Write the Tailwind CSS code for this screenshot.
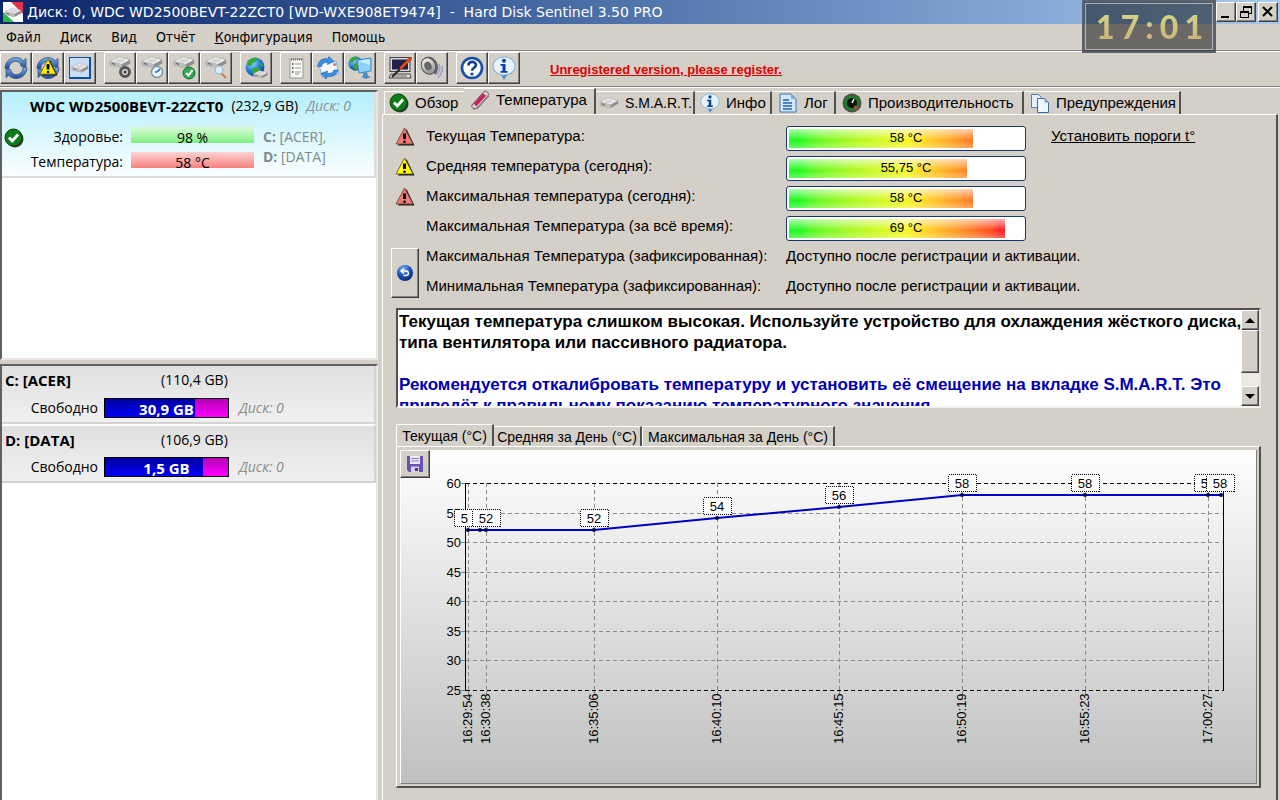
<!DOCTYPE html>
<html lang="ru">
<head>
<meta charset="utf-8">
<title>Hard Disk Sentinel</title>
<script src="https://cdn.jsdelivr.net/npm/@tailwindcss/browser@4"></script>
</head>
<body class="bg-[#d4d0c8] text-black font-['Liberation_Sans',Arial,sans-serif] text-[15px] leading-[18px]">

<svg class="absolute w-0 h-0" aria-hidden="true">
  <defs>
    <linearGradient id="gBlue" x1="0" y1="0" x2="0" y2="1"><stop offset="0" stop-color="#7cb0e0"/><stop offset="1" stop-color="#1c4c98"/></linearGradient>
    <linearGradient id="gGray" x1="0" y1="0" x2="0" y2="1"><stop offset="0" stop-color="#f4f4f4"/><stop offset="1" stop-color="#8c8c8c"/></linearGradient>
    <linearGradient id="gPlot" x1="0" y1="0" x2="0" y2="1"><stop offset="0" stop-color="#fefefe"/><stop offset="1" stop-color="#c0c0c0"/></linearGradient>
    <radialGradient id="gGlobe" cx=".35" cy=".3" r=".8"><stop offset="0" stop-color="#9fdcff"/><stop offset=".5" stop-color="#2a7fd6"/><stop offset="1" stop-color="#0b3c8c"/></radialGradient>
    <radialGradient id="gBall" cx=".4" cy=".25" r=".8"><stop offset="0" stop-color="#7fb2f5"/><stop offset=".5" stop-color="#1b56bd"/><stop offset="1" stop-color="#06246e"/></radialGradient>
  </defs>
  <symbol id="refresh" viewBox="0 0 24 24">
    <path d="M1 12.500C1 6 6 1.500 12 1.500c3 0 5.500 1.200 7.300 3.200L22 2.500v8h-8l2.500-2.600C15.300 6.300 13.700 5.300 12 5.300c-4 0-7 3-7 7.200z" fill="url(#gBlue)" stroke="#24477f" stroke-width=".7"/>
    <path d="M23 11.500C23 18 18 22.500 12 22.500c-3 0-5.500-1.200-7.300-3.200L2 21.500v-8h8l-2.500 2.600c1.200 1.600 2.800 2.600 4.500 2.600 4 0 7-3 7-7.200z" fill="url(#gBlue)" stroke="#24477f" stroke-width=".7"/>
    <circle cx="12" cy="12" r="5.200" fill="#d4d0c8"/>
  </symbol>
  <symbol id="drive" viewBox="0 0 24 14">
    <path d="M1 6l9-4.500L23 4v4l-9 5L1 10z" fill="#8d8d8d"/>
    <path d="M1 5.500L11 1l12 3-9 5z" fill="#f1f1f1" stroke="#a5a5a5" stroke-width=".6"/>
    <path d="M1 5.500L14 9v4L1 9.500z" fill="#bdbdbd"/><ellipse cx="12" cy="5" rx="5" ry="2" fill="#d6d6d6"/>
    <path d="M3 8l4 1" stroke="#555" stroke-width="1"/>
  </symbol>
  <symbol id="check" viewBox="0 0 20 20">
    <circle cx="11" cy="11" r="8.500" fill="#303830"/><circle cx="9.500" cy="9.500" r="8.500" fill="#0c7d18" stroke="#073f0a"/>
    <path d="M5 9.500l3.300 3.500L14 6.500" fill="none" stroke="#fff" stroke-width="2.800"/>
  </symbol>
  <symbol id="warn" viewBox="0 0 20 20">
    <path d="M3 18.500h16.500L11.500 2z" fill="#1a1a1a"/>
    <path d="M9.500 1L1 17h17z" fill="currentColor" stroke="#5c4a30" stroke-width=".8"/>
    <path d="M9.500 6.500v5.500" stroke="#000" stroke-width="3"/><circle cx="9.500" cy="14.700" r="1.300"/>
  </symbol>
  <symbol id="info" viewBox="0 0 24 24">
    <path d="M12 1c6.500 0 11 3.800 11 9s-3.500 8-8 8.700L12 23.500l-2.500-4.900C4.500 17.800 1 15 1 10s4.500-9 11-9z" fill="#e6f3fd" stroke="#8db4d8" stroke-width="1.200"/>
    <path d="M9.500 19L12 23.500l3-5z" fill="#4f8fd0"/>
    <circle cx="12" cy="4.700" r="2" fill="#0b3f9c"/><path d="M8.500 8h5v7h2v1.800h-7V15h2V9.800h-2z" fill="#0b3f9c"/>
  </symbol>
  <symbol id="globe" viewBox="0 0 20 20">
    <circle cx="10" cy="10" r="9.500" fill="url(#gGlobe)"/>
    <path d="M3 4c3-3 7-3.500 9-3 1 2-1 4-3 4.500S8 9 5.500 9 1.500 7 3 4zM8 11c3-1.500 6-1 7 1s-2 6-4.500 7C8 18 6 13 8 11zM16 5l2.500 3-1 2-2-2z" fill="#37a63b"/>
  </symbol>
</svg>

<div class="min-h-screen flex flex-col">

  <!-- title bar -->
  <header class="h-6 flex items-center pl-[3px] pr-[2px] gap-1 bg-linear-to-r from-[#0a246a] to-[#a6caf0] text-white">
    <svg class="w-5 h-5 shrink-0" viewBox="0 0 20 20"><rect width="20" height="20" fill="#fff"/><path d="M8 0h12v12z" fill="#e8304a"/><path d="M0 10v10h11z" fill="#28b84a"/><use href="#drive" x="1" y="4" width="18" height="13"/></svg>
    <h1 class="flex-1 truncate whitespace-pre font-['DejaVu_Sans',sans-serif] text-[14px]">Диск: 0, WDC WD2500BEVT-22ZCT0 [WD-WXE908ET9474]  -  Hard Disk Sentinel 3.50 PRO</h1>
    <div class="flex">
      <button aria-label="Свернуть" class="w-5 h-5 bg-[#d4d0c8] border border-t-white border-l-white border-r-[#404040] border-b-[#404040] shadow-[inset_-1px_-1px_#808080]"><svg viewBox="0 0 18 18" class="w-full h-full"><path d="M4 13h8v2H4z"/></svg></button>
      <button aria-label="Восстановить" class="w-5 h-5 bg-[#d4d0c8] border border-t-white border-l-white border-r-[#404040] border-b-[#404040] shadow-[inset_-1px_-1px_#808080]"><svg viewBox="0 0 18 18" class="w-full h-full" shape-rendering="crispEdges"><path d="M6 3h9v2H6zM6 5h1v3H6zM14 5h1v6h-3v-1h2zM3 8h9v2H3zM3 10h1v5H3zM11 10h1v5h-1zM3 14h9v1H3z"/></svg></button>
      <button aria-label="Закрыть" class="ml-[2px] w-5 h-5 bg-[#d4d0c8] border border-t-white border-l-white border-r-[#404040] border-b-[#404040] shadow-[inset_-1px_-1px_#808080]"><svg viewBox="0 0 18 18" class="w-full h-full"><path d="M4 4l9 9M13 4l-9 9" stroke="#000" stroke-width="2"/></svg></button>
    </div>
  </header>

  <!-- desktop clock floating above the window -->
  <div class="absolute top-0 right-[64px] w-[134px] h-[53px] border-2 border-[#5c6068] bg-black/50 p-px">
    <div class="h-full border border-white/50"><div class="h-full flex items-center justify-between pl-[10px] pr-[9px] font-['Lato',sans-serif] font-black text-[32px] leading-8 text-transparent bg-linear-to-b from-[#d6e08a] to-[#c8a878] bg-clip-text"><span>1</span><span>7</span><span>:</span><span>0</span><span>1</span></div></div>
  </div>

  <!-- menu -->
  <nav class="h-[27px] flex items-center gap-[19px] pl-[6px] border-b border-[#808080] font-['DejaVu_Sans_Condensed','Noto_Sans',sans-serif] text-[14px]">
    <button>Файл</button><button>Диск</button><button>Вид</button><button>Отчёт</button><button><u>К</u>онфигурация</button><button>Помощь</button>
  </nav>

  <!-- toolbar -->
  <div class="h-9 flex items-start gap-2 border-t border-t-white border-b border-b-[#808080]">
    <div class="flex">
      <button aria-label="Обновить" class="w-8 h-8 grid place-items-center border border-t-white border-l-white border-r-[#404040] border-b-[#404040] shadow-[inset_-1px_-1px_#808080]"><svg class="w-6 h-6"><use href="#refresh"/></svg></button>
      <button aria-label="Обновить всё" class="w-8 h-8 grid place-items-center border border-t-white border-l-white border-r-[#404040] border-b-[#404040] shadow-[inset_-1px_-1px_#808080] text-[#fff000]"><svg class="w-6 h-6" viewBox="0 0 24 24"><use href="#refresh" width="24" height="24"/><use href="#warn" x="3" y="2" width="19" height="19"/></svg></button>
      <button aria-label="Диски" class="w-8 h-8 grid place-items-center border border-t-white border-l-white border-r-[#404040] border-b-[#404040] shadow-[inset_-1px_-1px_#808080]"><svg class="w-6 h-6" viewBox="0 0 24 24"><rect x="1" y="1" width="22" height="22" fill="#0d4fae"/><rect x="2" y="2" width="19" height="19" fill="#c8defa"/><use href="#drive" x="3" y="6" width="18" height="12"/></svg></button>
    </div>
    <div class="flex">
      <button aria-label="Тест поверхности" class="w-8 h-8 grid place-items-center border border-t-white border-l-white border-r-[#404040] border-b-[#404040] shadow-[inset_-1px_-1px_#808080]"><svg class="w-6 h-6" viewBox="0 0 24 24"><use href="#drive" y="0" width="24" height="13"/><circle cx="17" cy="16" r="4.500" fill="#ddd" stroke="#555" stroke-width="3"/><circle cx="17" cy="16" r="1.500" fill="#333"/></svg></button>
      <button aria-label="Короткий тест" class="w-8 h-8 grid place-items-center border border-t-white border-l-white border-r-[#404040] border-b-[#404040] shadow-[inset_-1px_-1px_#808080]"><svg class="w-6 h-6" viewBox="0 0 24 24"><use href="#drive" y="0" width="24" height="13"/><circle cx="17" cy="16" r="5.500" fill="#eef6fc" stroke="#7c98b4" stroke-width="1.500"/><path d="M17 16l3-3M17 16h-2" stroke="#1766b4" stroke-width="1.600"/></svg></button>
      <button aria-label="Расширенный тест" class="w-8 h-8 grid place-items-center border border-t-white border-l-white border-r-[#404040] border-b-[#404040] shadow-[inset_-1px_-1px_#808080]"><svg class="w-6 h-6" viewBox="0 0 24 24"><use href="#drive" y="0" width="24" height="13"/><circle cx="17" cy="17" r="6" fill="#2fa84f" stroke="#177033"/><path d="M14 17l2.500 2.500L20.500 14" fill="none" stroke="#fff" stroke-width="2"/></svg></button>
      <button aria-label="Поиск дисков" class="w-8 h-8 grid place-items-center border border-t-white border-l-white border-r-[#404040] border-b-[#404040] shadow-[inset_-1px_-1px_#808080]"><svg class="w-6 h-6" viewBox="0 0 24 24"><use href="#drive" y="0" width="24" height="13"/><path d="M17 17l5 5" stroke="#c87850" stroke-width="2"/><circle cx="15" cy="14" r="4" fill="#d4efff" stroke="#9cb4c8" stroke-width="1.200"/></svg></button>
    </div>
    <button aria-label="Сеть" class="w-8 h-8 grid place-items-center border border-t-white border-l-white border-r-[#404040] border-b-[#404040] shadow-[inset_-1px_-1px_#808080]"><svg class="w-6 h-6" viewBox="0 0 24 24"><use href="#globe" x="1" y="1" width="20" height="20"/><use href="#drive" x="9" y="14" width="15" height="9"/></svg></button>
    <div class="flex">
      <button aria-label="Отчёт" class="w-8 h-8 grid place-items-center border border-t-white border-l-white border-r-[#404040] border-b-[#404040] shadow-[inset_-1px_-1px_#808080]"><svg class="w-6 h-6" viewBox="0 0 24 24"><rect x="6" y="3" width="13" height="19" fill="#f6f6f2" stroke="#9a9a94"/><path d="M7 3.500h11" stroke="#666" stroke-width="2" stroke-dasharray="1 1"/><path d="M11 8h6M11 12h6M11 16h6M11 18h4" stroke="#999"/><path d="M8 8h1.500M8 12h1.500M8 16h1.500" stroke="#333" stroke-width="1.500"/></svg></button>
      <button aria-label="Отправить отчёт" class="w-8 h-8 grid place-items-center border border-t-white border-l-white border-r-[#404040] border-b-[#404040] shadow-[inset_-1px_-1px_#808080]"><svg class="w-6 h-6" viewBox="0 0 24 24"><path d="M3 8l17-3 3 13-17 3z" fill="#f2f8fe" stroke="#86a8d0"/><path d="M1.500 10.500C2.500 4 7 2 12 3l1-2.500 5 5-6.500 3 .5-2.500c-4-.5-5.500.5-6.500 4.500z" fill="#3b8fe8" stroke="#1d5cb0" stroke-width=".6"/><path d="M22 14c-1 5-6 7-11 6.500L10 23l-5-5.500L11.500 15l-.5 2.500c4 .3 6-.7 7-3.500z" fill="#3b8fe8" stroke="#1d5cb0" stroke-width=".6"/><path d="M17 7.500l2.500-.5.600 2.500-2.500.5z" fill="#d07050"/></svg></button>
      <button aria-label="Удалённый доступ" class="w-8 h-8 grid place-items-center border border-t-white border-l-white border-r-[#404040] border-b-[#404040] shadow-[inset_-1px_-1px_#808080]"><svg class="w-6 h-6" viewBox="0 0 24 24"><use href="#globe" x="0" y="0" width="15" height="15"/><path d="M9 4l14-2v13l-12 2z" fill="#8fd0f8" stroke="#3f86c4"/><path d="M10 5l12-2v6z" fill="#c8ecff"/><path d="M15 17l4-1 1 4 3 1-5 2-5-2 2-1z" fill="#4a8cc8"/></svg></button>
    </div>
    <div class="flex">
      <button aria-label="Настройки" class="w-8 h-8 grid place-items-center border border-t-white border-l-white border-r-[#404040] border-b-[#404040] shadow-[inset_-1px_-1px_#808080]"><svg class="w-6 h-6" viewBox="0 0 24 24"><rect x="2" y="1.500" width="20" height="14" fill="#d8d8d8" stroke="#444"/><rect x="4" y="3.500" width="16" height="10" fill="#202048"/><path d="M3 18h19l1 4H1z" fill="#e4e4e4" stroke="#444"/><path d="M4 20h15" stroke="#666"/><path d="M20 3l3-2 1 2-10 10-3 1 1-3z" fill="#e04a20" stroke="#7a2008" stroke-width=".5"/><path d="M11.500 13.500L4 21" stroke="#222" stroke-width="1.800"/></svg></button>
      <button aria-label="Звук" class="w-8 h-8 grid place-items-center border border-t-white border-l-white border-r-[#404040] border-b-[#404040] shadow-[inset_-1px_-1px_#808080]"><svg class="w-6 h-6" viewBox="0 0 24 24"><path d="M5 2c4-2 9 0 11 4s2 8-1 12z" fill="#777" stroke="#4c4c4c"/><ellipse cx="8.500" cy="10" rx="7" ry="8.500" fill="url(#gGray)" stroke="#555" transform="rotate(-25 8.500 10)"/><ellipse cx="8" cy="10" rx="3.500" ry="4.500" fill="#666" transform="rotate(-25 8 10)"/><path d="M19 8c1.500 4 0 8-3 11M22 10c1 4-.5 8-4 12" fill="none" stroke="#a49cc8" stroke-width="1.500"/></svg></button>
    </div>
    <div class="flex">
      <button aria-label="Справка" class="w-8 h-8 grid place-items-center border border-t-white border-l-white border-r-[#404040] border-b-[#404040] shadow-[inset_-1px_-1px_#808080]"><svg class="w-6 h-6" viewBox="0 0 24 24"><circle cx="12" cy="12" r="10" fill="#fff" stroke="#164ea4" stroke-width="2.600"/><path d="M8.500 9.500c0-5 7.500-4.500 7.500-.5 0 2.800-4 2.700-4 5.800" fill="none" stroke="#123f90" stroke-width="2.600"/><circle cx="12" cy="18" r="1.600" fill="#123f90"/></svg></button>
      <button aria-label="О программе" class="w-8 h-8 grid place-items-center border border-t-white border-l-white border-r-[#404040] border-b-[#404040] shadow-[inset_-1px_-1px_#808080]"><svg class="w-6 h-6"><use href="#info"/></svg></button>
    </div>
    <a href="#" class="ml-[22px] mt-[2px] self-center font-bold text-[13px] text-[#e00000] underline">Unregistered version, please register.</a>
  </div>

  <div class="flex-1 flex border-t border-white">

    <!-- disk list -->
    <aside class="w-[378px] shrink-0 mr-1 pt-[2px] flex flex-col gap-1 font-['Open_Sans',sans-serif] text-[14px] leading-5">
      <section class="h-[270px] bg-white border-2 border-t-[#606060] border-l-[#606060] border-r-[#e8e6e0] border-b-[#e8e6e0]">
        <div class="h-[86px] pt-1 border-r-2 border-b-2 border-[#dcdcdc] bg-linear-to-b from-[#b4effc] to-[#fafeff]">
          <p class="pl-7 flex gap-2 whitespace-nowrap"><b class="text-[15px]">WDC WD2500BEVT-22ZCT0</b><span>(232,9 GB)</span><i class="text-[#8a9498]">Диск: 0</i></p>
          <div class="mt-2 flex">
            <svg class="w-5 h-5 ml-[2px] mt-1"><use href="#check"/></svg>
            <div class="w-[99px] text-right leading-[25px]"><p>Здоровье:</p><p>Температура:</p></div>
            <div class="ml-2 w-[123px] pt-[3px] flex flex-col gap-[9px] text-center leading-[21px]">
              <div role="meter" aria-label="Здоровье" aria-valuenow="98" class="h-4 bg-linear-to-b from-[#d8fad8] to-[#80f080]">98 %</div>
              <div role="meter" aria-label="Температура" aria-valuenow="58" class="h-4 bg-linear-to-b from-[#fcd4d4] to-[#f48080]">58 °C</div>
            </div>
            <div class="ml-[9px] mt-[3px] text-[#808a8c]"><p><b>C:</b> [ACER],</p><p><b>D:</b> [DATA]</p></div>
          </div>
        </div>
      </section>
      <section class="flex-1 bg-white border-2 border-b-0 border-t-[#606060] border-l-[#606060] border-r-[#e8e6e0]">
        <div class="h-[58px] pt-1 border-r-2 border-b-2 border-[#d4d4d4] bg-linear-to-b from-[#e0e0e0] to-[#f0f0f0]">
          <div class="flex pl-[3px]"><b class="w-[156px] text-[15px]">C: [ACER]</b><span>(110,4 GB)</span></div>
          <div class="mt-2 flex items-center">
            <span class="w-[96px] text-right">Свободно</span>
            <div role="meter" aria-label="Свободно C" aria-valuenow="28" class="ml-[6px] w-[125px] h-5 border border-black bg-linear-to-b from-[#b400b4] to-[#ff00ff] text-white font-bold text-[15px] leading-5"><div class="h-full text-center bg-linear-to-b from-[#0000a0] to-[#0000f8]" style="width:73%"><span class="block w-[123px] whitespace-nowrap">30,9 GB</span></div></div>
            <i class="ml-[10px] text-[#8c8c8c]">Диск: 0</i>
          </div>
        </div>
        <div class="h-[59px] pt-1 border-r-2 border-b-2 border-t-2 border-t-white border-[#d4d4d4] bg-linear-to-b from-[#e0e0e0] to-[#f0f0f0]">
          <div class="flex pl-[3px]"><b class="w-[156px] text-[15px]">D: [DATA]</b><span>(106,9 GB)</span></div>
          <div class="mt-[7px] flex items-center">
            <span class="w-[96px] text-right">Свободно</span>
            <div role="meter" aria-label="Свободно D" aria-valuenow="1" class="ml-[6px] w-[125px] h-5 border border-black bg-linear-to-b from-[#b400b4] to-[#ff00ff] text-white font-bold text-[15px] leading-5"><div class="h-full text-center bg-linear-to-b from-[#0000a0] to-[#0000f8]" style="width:80%"><span class="block w-[123px] whitespace-nowrap">1,5 GB</span></div></div>
            <i class="ml-[10px] text-[#8c8c8c]">Диск: 0</i>
          </div>
        </div>
      </section>
    </aside>

    <main class="flex-1 min-w-0 mr-[2px] flex flex-col">
      <!-- page tabs -->
      <div role="tablist" class="h-[26px] flex items-end pl-[2px] whitespace-nowrap">
        <button role="tab" class="h-[23px] w-[80px] flex items-center gap-[6px] pl-1 border-t border-l border-white"><svg class="w-5 h-5"><use href="#check"/></svg>Обзор</button>
        <button role="tab" aria-selected="true" class="h-[26px] w-[132px] pb-[3px] flex items-center gap-[6px] pl-[6px] border-t border-white border-r-2 border-r-[#505050]"><svg class="w-5 h-5" viewBox="0 0 20 20"><path d="M2 15L14 1.500c2-1 5 1 4.500 3.500L7 18c-2 2-6.500 0-5-3z" fill="#d8ccd0" stroke="#6a5c62"/><path d="M5 15L14.500 4.500" stroke="#c8205c" stroke-width="4"/><path d="M3 19l5-1L19 6" fill="none" stroke="#777"/></svg>Температура</button>
        <button role="tab" class="h-[23px] w-[99px] flex items-center gap-[6px] pl-[3px] text-[14px] border-t border-white border-r-2 border-r-[#505050]"><svg class="w-5 h-5" viewBox="0 0 20 20"><use href="#drive" y="4" width="20" height="12"/></svg>S.M.A.R.T.</button>
        <button role="tab" class="h-[23px] w-[77px] flex items-center gap-[6px] pl-[5px] border-t border-white border-r-2 border-r-[#505050]"><svg class="w-5 h-5"><use href="#info"/></svg>Инфо</button>
        <button role="tab" class="h-[23px] w-[64px] flex items-center gap-[6px] pl-[6px] border-t border-white border-r-2 border-r-[#505050]"><svg class="w-5 h-5" viewBox="0 0 20 20"><path d="M2 1h11l5 5v13H2z" fill="#d4e8fc" stroke="#3c78c0"/><path d="M13 1v5h5z" fill="#78b0ec"/><path d="M5 7h6M5 10h9M5 13h9M5 16h9" stroke="#2860b0" stroke-width="1.500"/></svg>Лог</button>
        <button role="tab" class="h-[23px] w-[188px] flex items-center gap-[6px] pl-[6px] border-t border-white border-r-2 border-r-[#505050]"><svg class="w-5 h-5" viewBox="0 0 20 20"><circle cx="10" cy="10" r="9.500" fill="#5c4a48"/><circle cx="10" cy="10" r="8" fill="#1f7c30"/><circle cx="10" cy="10" r="5" fill="#0a140a"/><path d="M10 10l2-4" stroke="#fff" stroke-width="1.500"/><path d="M12 12l4 3-3 2z" fill="#e84040"/></svg>Производительность</button>
        <button role="tab" class="h-[23px] w-[157px] flex items-center gap-[6px] pl-[6px] border-t border-white border-r-2 border-r-[#505050]"><svg class="w-5 h-5" viewBox="0 0 20 20"><path d="M1.500 1.500h7l3 3v10h-10z" fill="#e4f0fc" stroke="#5080b8"/><path d="M7.500 5.500h7l4 4v10h-11z" fill="#f0f6fe" stroke="#3c68a8"/><path d="M14.500 5.500v4h4z" fill="#6ca0e0"/></svg>Предупреждения</button>
      </div>

      <div role="tabpanel" class="flex-1 border-t border-l border-white border-r-2 border-r-[#505050] pt-[6px] pb-3 flex flex-col">
        <div class="pl-2 grid grid-cols-[28px_7px_360px_265px_1fr] auto-rows-[30px] items-center">
          <svg class="w-5 h-5 ml-1 mt-[2px] text-[#f07878]"><use href="#warn"/></svg>
          <span class="col-start-3">Текущая Температура:</span>
          <div role="meter" aria-label="Текущая Температура" aria-valuenow="58" class="w-[240px] h-[25px] mt-1 p-[2px] rounded-[3px] border border-[#16386c] bg-white"><div class="h-full flex relative bg-linear-to-r from-[#20f820] from-5% via-[#f4f820] via-50% to-[#ff2020] to-90%"><div class="bg-linear-to-b from-white/65 via-white/0 via-60% to-white/30" style="width:78.600%"></div><div class="flex-1 bg-white"></div><span class="absolute inset-0 text-center text-[13px]">58 °C</span></div></div>
          <a href="#" class="underline">Установить пороги t°</a>

          <svg class="w-5 h-5 ml-1 mt-[2px] text-[#ffff00]"><use href="#warn"/></svg>
          <span class="col-start-3">Средняя температура (сегодня):</span>
          <div role="meter" aria-label="Средняя температура" aria-valuenow="55.75" class="w-[240px] h-[25px] mt-1 p-[2px] rounded-[3px] border border-[#16386c] bg-white"><div class="h-full flex relative bg-linear-to-r from-[#20f820] from-5% via-[#f4f820] via-50% to-[#ff2020] to-90%"><div class="bg-linear-to-b from-white/65 via-white/0 via-60% to-white/30" style="width:76%"></div><div class="flex-1 bg-white"></div><span class="absolute inset-0 text-center text-[13px]">55,75 °C</span></div></div>

          <svg class="w-5 h-5 ml-1 mt-[2px] col-start-1 text-[#f07878]"><use href="#warn"/></svg>
          <span class="col-start-3">Максимальная температура (сегодня):</span>
          <div role="meter" aria-label="Максимальная температура сегодня" aria-valuenow="58" class="w-[240px] h-[25px] mt-1 p-[2px] rounded-[3px] border border-[#16386c] bg-white"><div class="h-full flex relative bg-linear-to-r from-[#20f820] from-5% via-[#f4f820] via-50% to-[#ff2020] to-90%"><div class="bg-linear-to-b from-white/65 via-white/0 via-60% to-white/30" style="width:78.600%"></div><div class="flex-1 bg-white"></div><span class="absolute inset-0 text-center text-[13px]">58 °C</span></div></div>

          <span class="col-start-3">Максимальная Температура (за всё время):</span>
          <div role="meter" aria-label="Максимальная температура за всё время" aria-valuenow="69" class="w-[240px] h-[25px] mt-1 p-[2px] rounded-[3px] border border-[#16386c] bg-white"><div class="h-full flex relative bg-linear-to-r from-[#20f820] from-5% via-[#f4f820] via-50% to-[#ff2020] to-90%"><div class="bg-linear-to-b from-white/65 via-white/0 via-60% to-white/30" style="width:92.300%"></div><div class="flex-1 bg-white"></div><span class="absolute inset-0 text-center text-[13px]">69 °C</span></div></div>

          <button aria-label="Сбросить" class="col-start-1 row-start-5 row-span-2 mt-[3px] w-7 h-[50px] grid place-items-center border border-t-white border-l-white border-r-[#404040] border-b-[#404040] shadow-[inset_-1px_-1px_#808080]"><svg class="w-4 h-4" viewBox="0 0 16 16"><circle cx="8" cy="8" r="8" fill="url(#gBall)"/><path d="M7 3.500L4 6l3 2.500M4.500 6H9c3 0 3.500 4.500 0 4.500H6.500" fill="none" stroke="#fff" stroke-width="1.500"/></svg></button>
          <span class="col-start-3 row-start-5">Максимальная Температура (зафиксированная):</span>
          <span class="col-start-4 row-start-5 whitespace-nowrap">Доступно после регистрации и активации.</span>
          <span class="col-start-3 row-start-6">Минимальная Температура (зафиксированная):</span>
          <span class="col-start-4 row-start-6 whitespace-nowrap">Доступно после регистрации и активации.</span>
        </div>

        <!-- advice -->
        <div class="mt-[7px] ml-[13px] mr-[15px] h-[100px] flex bg-white border-2 border-t-[#505050] border-l-[#505050] border-r-[#e8e6e0] border-b-[#f4f2ec] overflow-hidden">
          <div class="flex-1 h-full overflow-hidden pl-px pt-px font-bold text-[17px] leading-[21px] whitespace-nowrap">
            <p>Текущая температура слишком высокая. Используйте устройство для охлаждения жёсткого диска,<br>типа вентилятора или пассивного радиатора.</p>
            <p class="mt-[21px] text-[#0000b4]">Рекомендуется откалибровать температуру и установить её смещение на вкладке S.M.A.R.T. Это<br>приведёт к правильному показанию температурного значения.</p>
          </div>
          <div class="w-[18px] shrink-0 flex flex-col bg-[#ebe9e4]">
            <button aria-label="Вверх" class="h-5 grid place-items-center bg-[#d4d0c8] border border-t-white border-l-white border-r-[#404040] border-b-[#404040] shadow-[inset_-1px_-1px_#808080]"><svg class="w-[10px] h-[5px]" viewBox="0 0 8 4"><path d="M0 4l4-4 4 4z"/></svg></button>
            <div class="h-[43px] bg-[#d4d0c8] border border-t-white border-l-white border-r-[#404040] border-b-[#404040] shadow-[inset_-1px_-1px_#808080]"></div>
            <button aria-label="Вниз" class="mt-auto h-5 grid place-items-center bg-[#d4d0c8] border border-t-white border-l-white border-r-[#404040] border-b-[#404040] shadow-[inset_-1px_-1px_#808080]"><svg class="w-[10px] h-[5px]" viewBox="0 0 8 4"><path d="M0 0h8L4 4z"/></svg></button>
          </div>
        </div>

        <!-- chart tabs -->
        <div role="tablist" class="mt-4 ml-[13px] h-[22px] flex items-end text-[14px] whitespace-nowrap">
          <button role="tab" aria-selected="true" class="h-[22px] w-[98px] border-t border-l border-white border-r-2 border-r-[#505050]">Текущая (°C)</button>
          <button role="tab" class="h-5 w-[148px] border-t border-white border-r-2 border-r-[#505050]">Средняя за День (°C)</button>
          <button role="tab" class="h-5 w-[193px] border-t border-l border-white border-r-2 border-r-[#505050]">Максимальная за День (°C)</button>
        </div>
        <div role="tabpanel" class="relative ml-[13px] mr-[15px] p-[3px] pr-[2px] pb-[2px] border border-white border-r-2 border-b-2 border-r-[#505050] border-b-[#505050]">
          <button aria-label="Сохранить" class="absolute left-[3px] top-[3px] w-[30px] h-7 grid place-items-center bg-[#d4d0c8] border border-t-white border-l-white border-r-[#404040] border-b-[#404040] shadow-[inset_-1px_-1px_#808080]"><svg class="w-4 h-4" viewBox="0 0 16 16"><path d="M0 0h16v16H2l-2-2z" fill="#6a50b4"/><path d="M3 0h10v8H3z" fill="#f0ecfa"/><path d="M4 2.500h8M4 5h8" stroke="#8c78c8"/><path d="M4 10.500h8V16H4z" fill="#d8d0f0"/><path d="M8 12h3v3H8z" fill="#4a3490"/></svg></button>
          <svg class="block w-full h-auto border-l border-white border-r border-b border-r-[#808080] border-b-[#808080]" viewBox="401 450 855 333" role="img" aria-label="График температуры">
            <rect x="401" y="450" width="855" height="333" fill="url(#gPlot)"/>
            <g stroke="#8c8c8c" stroke-dasharray="4 3" shape-rendering="crispEdges">
              <path d="M466 513.500H1223M466 542.500H1223M466 572.500H1223M466 601.500H1223M466 631.500H1223M466 660.500H1223"/>
              <path d="M468.500 483V694M486.500 483V694M594.500 483V694M717.500 483V694M839.500 483V694M962.500 483V694M1085.500 483V694M1208.500 483V694"/>
            </g>
            <g stroke="#000" shape-rendering="crispEdges">
              <path d="M466 483.500H1223M466 690.500H1223" stroke-dasharray="4 3"/>
              <path d="M465.500 483V691M1223.500 483V691"/>
              <path stroke="#808080" d="M461 483.500h4M461 513.500h4M461 542.500h4M461 572.500h4M461 601.500h4M461 631.500h4M461 660.500h4M461 690.500h4M468.500 691v4M486.500 691v4M594.500 691v4M717.500 691v4M839.500 691v4M962.500 691v4M1085.500 691v4M1208.500 691v4"/>
            </g>
            <g font-family="Liberation Sans, Arial, sans-serif" font-size="13" text-anchor="end">
              <text x="461" y="488">60</text><text x="461" y="518">55</text><text x="461" y="547">50</text><text x="461" y="577">45</text><text x="461" y="606">40</text><text x="461" y="636">35</text><text x="461" y="665">30</text><text x="461" y="695">25</text>
            </g>
            <path d="M468 530H594L717 518L839 507L962 495H1222" fill="none" stroke="#0000c0" stroke-width="2"/>
            <g fill="#000050"><circle cx="468" cy="530" r="2"/><circle cx="480" cy="530" r="2"/><circle cx="486" cy="530" r="2"/><circle cx="594" cy="530" r="2"/><circle cx="717" cy="518" r="2"/><circle cx="839" cy="507" r="2"/><circle cx="962" cy="495" r="2"/><circle cx="1085" cy="495" r="2"/><circle cx="1208" cy="495" r="2"/><circle cx="1221" cy="495" r="2"/></g>
            <g fill="#fff" stroke="#000" stroke-dasharray="1 1" shape-rendering="crispEdges">
              <path d="M454.500 509.500h28v17h-28zM580.500 509.500h28v17h-28zM703.500 497.500h28v17h-28zM825.500 486.500h28v17h-28zM948.500 474.500h28v17h-28zM1071.500 474.500h28v17h-28zM1194.500 474.500h28v17h-28z"/>
            </g>
            <g font-family="Liberation Sans, Arial, sans-serif" font-size="13" text-anchor="middle">
              <text x="468" y="523">52</text><text x="594" y="523">52</text><text x="717" y="511">54</text><text x="839" y="500">56</text><text x="962" y="488">58</text><text x="1085" y="488">58</text><text x="1208" y="488">58</text>
              <rect x="468" y="511" width="5" height="15" fill="#fff"/>
              <path d="M472.500 509.500h28v17h-28zM1206.500 474.500h28v17h-28z" fill="#fff" stroke="#000" stroke-dasharray="1 1" shape-rendering="crispEdges"/>
              <text x="486" y="523">52</text><text x="1220" y="488">58</text>
            </g>
            <g font-family="Liberation Sans, Arial, sans-serif" font-size="13">
              <text transform="translate(472 744) rotate(-90)">16:29:54</text>
              <text transform="translate(490 744) rotate(-90)">16:30:38</text>
              <text transform="translate(598 744) rotate(-90)">16:35:06</text>
              <text transform="translate(721 744) rotate(-90)">16:40:10</text>
              <text transform="translate(843 744) rotate(-90)">16:45:15</text>
              <text transform="translate(966 744) rotate(-90)">16:50:19</text>
              <text transform="translate(1089 744) rotate(-90)">16:55:23</text>
              <text transform="translate(1212 744) rotate(-90)">17:00:27</text>
            </g>
          </svg>
        </div>
      </div>
    </main>
  </div>
</div>
</body>
</html>
